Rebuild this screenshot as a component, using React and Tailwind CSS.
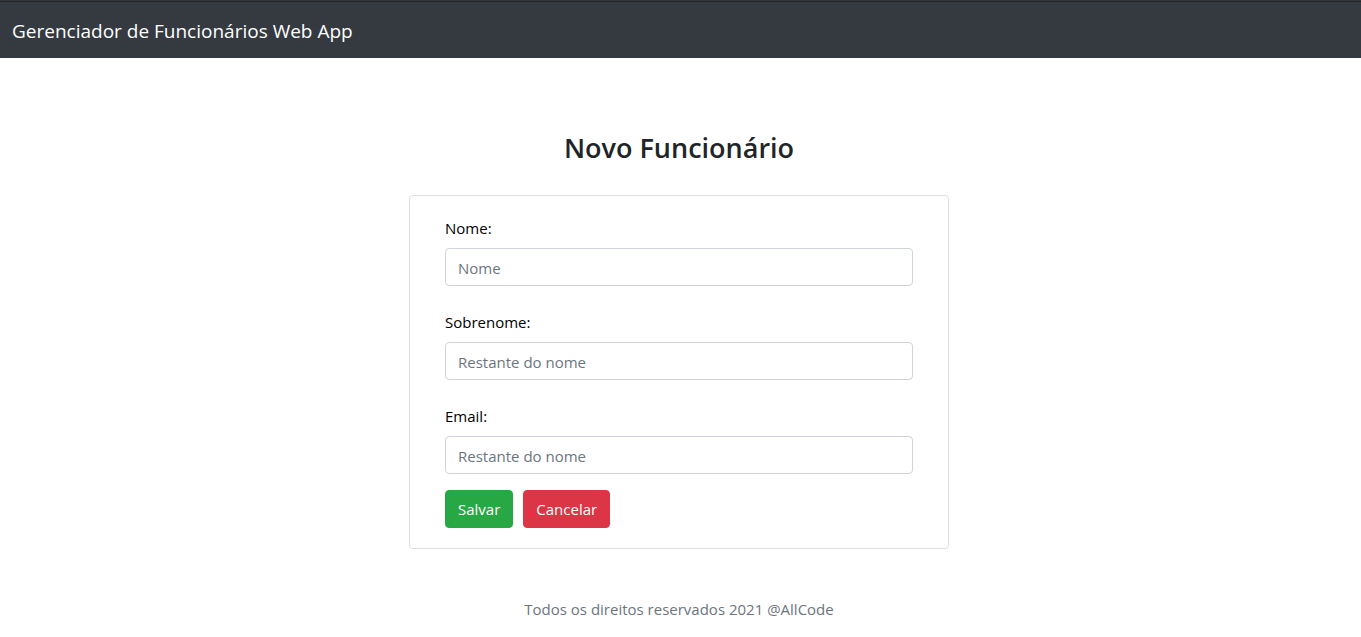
const fields = [
  { id: "nome", label: "Nome:", placeholder: "Nome", type: "text" },
  { id: "sobrenome", label: "Sobrenome:", placeholder: "Restante do nome", type: "text" },
  { id: "email", label: "Email:", placeholder: "Restante do nome", type: "email" },
];

function Field({ id, label, placeholder, type }) {
  return (
    <div className="mb-4">
      <label htmlFor={id} className="mb-2 block leading-6 text-black">{label}</label>
      <input
        id={id}
        name={id}
        type={type}
        placeholder={placeholder}
        className="block h-[38px] w-full rounded border border-[#ced4da] bg-white px-3 pt-0.5 text-[#495057] placeholder:text-[#6c757d] focus:border-[#80bdff] focus:outline-none"
      />
    </div>
  );
}

export default function App() {
  return (
    <div className="flex min-h-screen flex-col bg-white font-['Open_Sans','Noto_Sans',sans-serif] text-[15px] text-[#212529]">
      <div className="h-px bg-[#35363a]" />
      <header className="flex h-[57px] items-center border-t border-[#242528] bg-[#343a40] px-3 pt-px">
        <a href="#" className="text-[19px] leading-7 text-white">Gerenciador de Funcionários Web App</a>
      </header>
      <div className="pr-[3px]">
        <main className="mx-auto w-full max-w-[540px] pt-[73px]">
          <h1 className="mb-[30px] text-center text-[27px] font-semibold leading-[34px]">Novo Funcionário</h1>
          <form className="rounded border border-[#dfdfdf] px-[35px] py-5">
            <div className="flex flex-col gap-2">
              {fields.map((field) => <Field key={field.id} {...field} />)}
            </div>
            <div className="flex gap-2.5">
              <button type="submit" className="h-[38px] rounded border border-[#28a745] bg-[#28a745] px-3 text-white">Salvar</button>
              <button type="button" className="h-[38px] rounded border border-[#dc3545] bg-[#dc3545] px-3 text-white">Cancelar</button>
            </div>
          </form>
        </main>
        <footer className="pt-12 text-center leading-6 text-[#6c757d]">Todos os direitos reservados 2021 @AllCode</footer>
      </div>
    </div>
  );
}
